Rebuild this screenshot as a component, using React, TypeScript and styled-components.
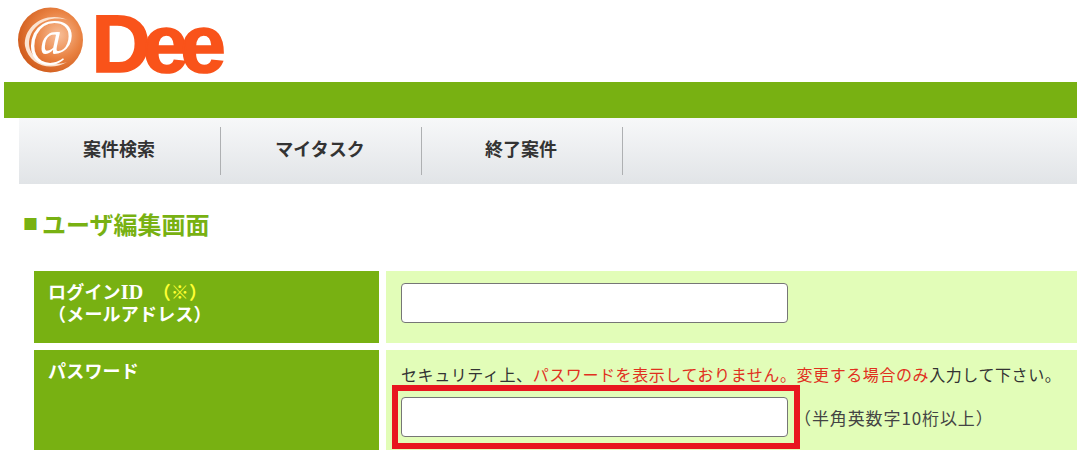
import styled, { createGlobalStyle } from "styled-components";

const GlobalStyle = createGlobalStyle`
  html, body {
    margin: 0;
    padding: 0;
    background: #fff;
    overflow: hidden;
  }
  body {
    font-family: "Noto Sans CJK JP", "Noto Sans", sans-serif;
    color: #333;
  }
`;

const Page = styled.div`
  width: 1077px;
  height: 456px;
  box-sizing: border-box;
  padding-left: 4px;
`;

const Header = styled.header`
  height: 82px;
  padding-left: 14px;
`;

const GreenBar = styled.div`
  height: 36px;
  background: #78b112;
`;

const Nav = styled.nav`
  display: flex;
  height: 66px;
  margin-left: 15px;
  padding: 9px 0 0 1px;
  box-sizing: border-box;
  background: linear-gradient(#f7f8f9, #e1e4e7);
`;

const NavItem = styled.a`
  width: 201px;
  height: 48px;
  border-right: 1px solid #aeb0b2;
  box-sizing: border-box;
  display: flex;
  align-items: center;
  justify-content: center;
  font-size: 18px;
  font-weight: 700;
  color: #333;
  padding: 0 2px 6px 0;
`;

const Title = styled.h1`
  display: flex;
  align-items: center;
  margin: 25px 0 0 19px;
  height: 62px;
  padding-bottom: 32px;
  box-sizing: border-box;
  font-size: 24px;
  line-height: 30px;
  font-weight: 700;
  color: #78b112;
`;

const TitleMark = styled.span`
  width: 19px;
  font-size: 15px;
`;

const Form = styled.div`
  display: grid;
  grid-template-columns: 345px 691px;
  grid-template-rows: 72px 100px;
  column-gap: 7px;
  row-gap: 7px;
  margin-left: 30px;
`;

const Label = styled.div`
  background: #78b112;
  color: #fff;
  font-size: 18px;
  line-height: 21px;
  font-weight: 700;
  letter-spacing: 0.2px;
  padding: 10px 14px;
  box-sizing: border-box;
  white-space: pre;
`;

const LatinId = styled.span`
  font-family: "Liberation Serif", serif;
  font-size: 20px;
`;

const Required = styled.span`
  color: #ffff33;
`;

const Value = styled.div`
  background: #e2fdb8;
  padding: 12px 15px 0;
  box-sizing: border-box;
`;

const Notice = styled.p`
  margin: 0 0 11px;
  font-size: 16px;
  line-height: 24px;
  font-weight: 400;
  letter-spacing: 0.58px;
  white-space: nowrap;
  color: #333;
`;

const Alert = styled.span`
  color: #e0301e;
`;

const FieldRow = styled.div`
  display: flex;
  align-items: center;
`;

const FieldWrap = styled.div`
  position: relative;
  width: 387px;
  height: 40px;
`;

const TextInput = styled.input`
  display: block;
  width: 100%;
  height: 100%;
  box-sizing: border-box;
  background: #fff;
  border: 1px solid #767676;
  border-radius: 4px;
  outline: none;
`;

const Highlight = styled.div`
  position: absolute;
  inset: -12px -12px -12px -9px;
  border: 6px solid #e8161f;
  pointer-events: none;
`;

const Hint = styled.span`
  margin-left: 6px;
  font-size: 17px;
  letter-spacing: 0.9px;
  color: #444;
`;

function Logo() {
  return (
    <svg width="212" height="82" viewBox="0 0 212 82" style={{ display: "block" }}>
      <defs>
        <radialGradient id="ball" cx="0.62" cy="0.42" r="0.65">
          <stop offset="0" stopColor="#f8c09a" />
          <stop offset="0.55" stopColor="#e98242" />
          <stop offset="1" stopColor="#cf5a1a" />
        </radialGradient>
      </defs>
      <circle cx="32.5" cy="40" r="32.5" fill="url(#ball)" />
      <path
        d="M7 46C5 26 28 10 50 20C30 14 11 26 11 44C12 60 31 68 49 62C32 72 11 65 7 46Z"
        fill="#fbe3d0"
      />
      <text
        x="33"
        y="54"
        textAnchor="middle"
        fontFamily="Liberation Serif"
        fontStyle="italic"
        fontSize="50"
        fill="#fff"
      >
        @
      </text>
      <text
        x="73.5"
        y="72"
        fontFamily="Liberation Sans"
        fontWeight="700"
        fontSize="82"
        fill="#f9531a"
        stroke="#f9531a"
        strokeWidth="1.6"
        letterSpacing="-8"
      >
        Dee
      </text>
    </svg>
  );
}

export default function App() {
  return (
    <Page>
      <GlobalStyle />
      <Header>
        <Logo />
      </Header>
      <GreenBar />
      <Nav>
        <NavItem>案件検索</NavItem>
        <NavItem>マイタスク</NavItem>
        <NavItem>終了案件</NavItem>
      </Nav>
      <Title>
        <TitleMark>■</TitleMark>ユーザ編集画面
      </Title>
      <Form>
        <Label>
          ログイン<LatinId>ID</LatinId>　<Required>（※）</Required>
          {"\n"}（メールアドレス）
        </Label>
        <Value>
          <FieldWrap>
            <TextInput type="text" />
          </FieldWrap>
        </Value>
        <Label>パスワード</Label>
        <Value>
          <Notice>
            セキュリティ上、<Alert>パスワードを表示しておりません。変更する場合のみ</Alert>入力して下さい。
          </Notice>
          <FieldRow>
            <FieldWrap>
              <TextInput type="password" />
              <Highlight />
            </FieldWrap>
            <Hint>（半角英数字10桁以上）</Hint>
          </FieldRow>
        </Value>
      </Form>
    </Page>
  );
}
